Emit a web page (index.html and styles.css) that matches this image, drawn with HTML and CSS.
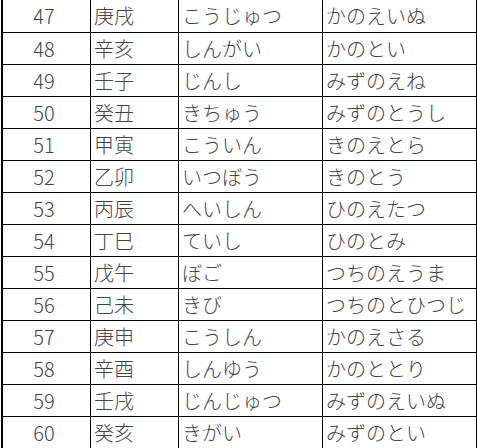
FILE: index.html
```html
<!DOCTYPE html>
<html lang="ja">
<head>
<meta charset="utf-8">
<link rel="stylesheet" href="styles.css">
</head>
<body>
<table class="eto">
<colgroup><col class="c-num"><col class="c-kanji"><col class="c-on"><col class="c-kun"></colgroup>
<tbody>
<tr><td class="num">47</td><td>庚戌</td><td>こうじゅつ</td><td>かのえいぬ</td></tr>
<tr><td class="num">48</td><td>辛亥</td><td>しんがい</td><td>かのとい</td></tr>
<tr><td class="num">49</td><td>壬子</td><td>じんし</td><td>みずのえね</td></tr>
<tr><td class="num">50</td><td>癸丑</td><td>きちゅう</td><td>みずのとうし</td></tr>
<tr><td class="num">51</td><td>甲寅</td><td>こういん</td><td>きのえとら</td></tr>
<tr><td class="num">52</td><td>乙卯</td><td>いつぼう</td><td>きのとう</td></tr>
<tr><td class="num">53</td><td>丙辰</td><td>へいしん</td><td>ひのえたつ</td></tr>
<tr><td class="num">54</td><td>丁巳</td><td>ていし</td><td>ひのとみ</td></tr>
<tr><td class="num">55</td><td>戊午</td><td>ぼご</td><td>つちのえうま</td></tr>
<tr><td class="num">56</td><td>己未</td><td>きび</td><td>つちのとひつじ</td></tr>
<tr><td class="num">57</td><td>庚申</td><td>こうしん</td><td>かのえさる</td></tr>
<tr><td class="num">58</td><td>辛酉</td><td>しんゆう</td><td>かのととり</td></tr>
<tr><td class="num">59</td><td>壬戌</td><td>じんじゅつ</td><td>みずのえいぬ</td></tr>
<tr><td class="num">60</td><td>癸亥</td><td>きがい</td><td>みずのとい</td></tr>
</tbody>
</table>
</body>
</html>
```
FILE: styles.css
```css
html, body {
  margin: 0;
  padding: 0;
  background: #ffffff;
}
.eto {
  margin-left: 1px;
  width: 476px;
  table-layout: fixed;
  border-collapse: separate;
  border-spacing: 0;
  font-family: "Noto Sans CJK JP", "Noto Sans", sans-serif;
  font-size: 20px;
  font-weight: 300;
  color: #444444;
}
.c-num { width: 90px; }
.c-kanji { width: 88px; }
.c-on { width: 144px; }
.c-kun { width: 154px; }
.eto td {
  box-sizing: border-box;
  height: 32px;
  padding: 0 0 0 3px;
  border-top: 1px solid #000;
  border-right: 1px solid #000;
  line-height: 30px;
  white-space: nowrap;
  vertical-align: middle;
}
.eto tr:first-child td {
  border-top: none;
}
.eto td.num {
  border-left: 2px solid #000;
  text-align: center;
  padding: 0 5px 0 0;
}
```
